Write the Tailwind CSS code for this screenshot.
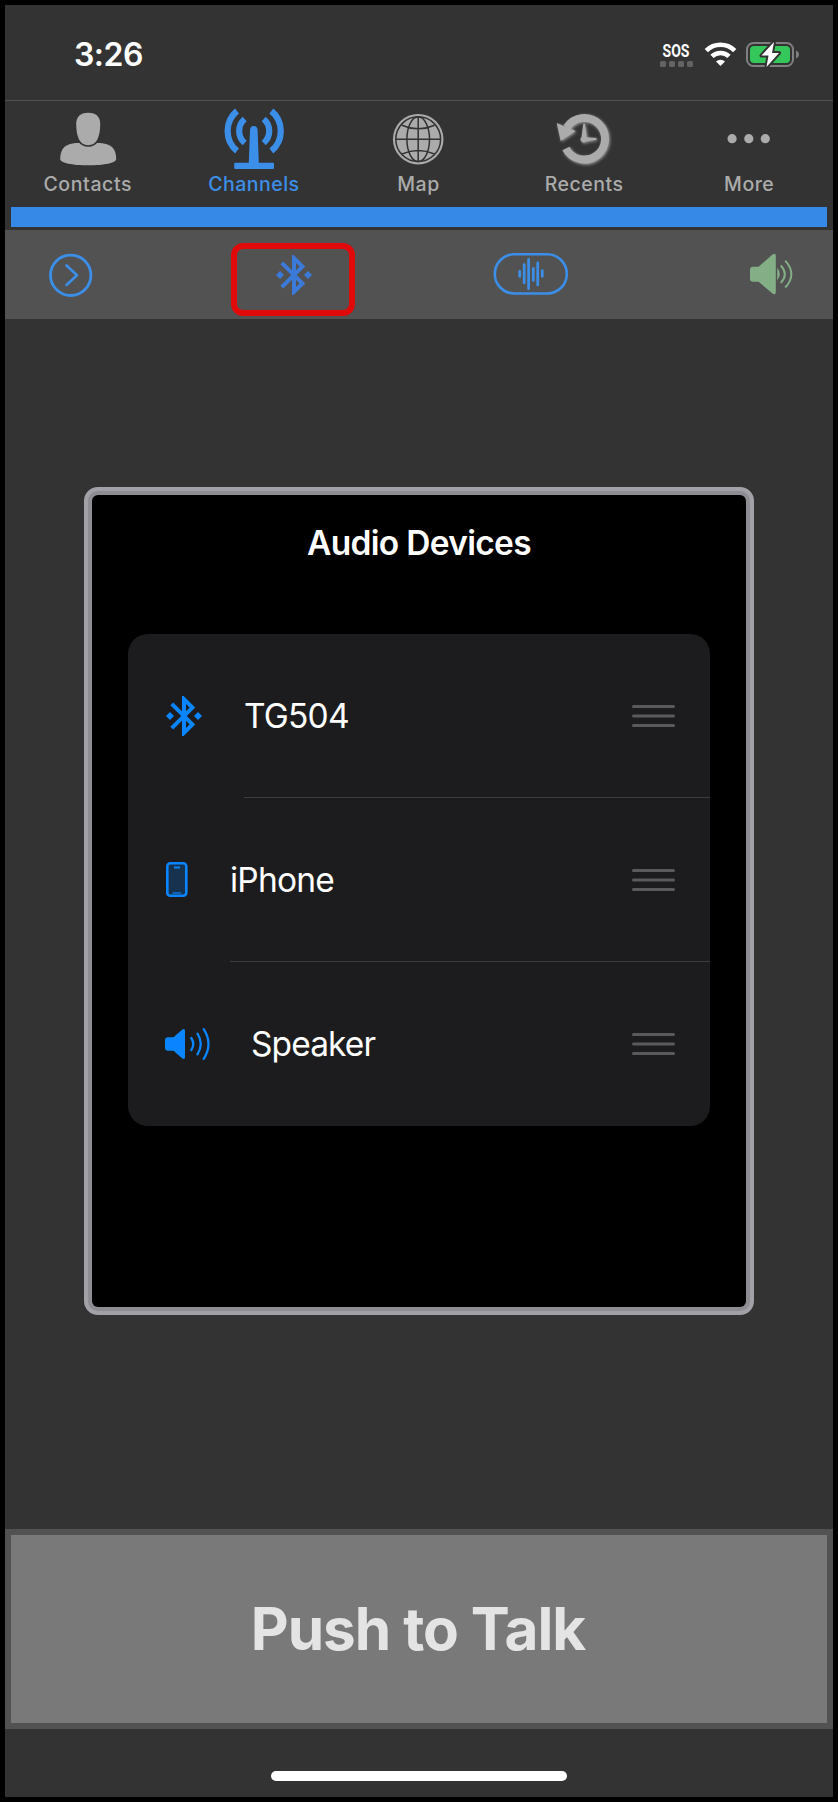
<!DOCTYPE html>
<html lang="en">
<head>
    <meta charset="UTF-8">
    <meta name="viewport" content="width=device-width, initial-scale=1.0">
    <title>Audio Devices</title>
    <script src="https://cdn.jsdelivr.net/npm/@tailwindcss/browser@4"></script>
</head>
<body class="bg-black font-['Inter',sans-serif]">
    <div class="w-[838px] h-[1802px] border-5 border-black bg-[#333333] flex flex-col overflow-hidden">

        <!-- Status bar -->
        <header class="h-24 shrink-0 border-b border-[#525252] flex justify-between pl-[69px] pr-[33px]">
            <span class="text-white text-[32px] font-semibold leading-none pt-[34px] tracking-[-0.5px]">3:26</span>
            <svg class="w-[142px] h-[95px]" viewBox="658 5 142 95">
                <text x="662.5" y="57" font-family="Roboto" font-weight="700" font-size="18" fill="#fff" textLength="27" lengthAdjust="spacingAndGlyphs">SOS</text>
                <g fill="#636363">
                    <rect x="660" y="61" width="6" height="6" rx="1.5"/>
                    <rect x="669" y="61" width="6" height="6" rx="1.5"/>
                    <rect x="678" y="61" width="6" height="6" rx="1.5"/>
                    <rect x="687" y="61" width="6" height="6" rx="1.5"/>
                </g>
                <g fill="none" stroke="#fff" stroke-width="4.6">
                    <path d="M706.3 50.6A20.2 20.2 0 0 1 734.7 50.6"/>
                    <path d="M712 56.4A12.2 12.2 0 0 1 729 56.4"/>
                </g>
                <path d="M720.5 66L716 61.4A6.6 6.6 0 0 1 725 61.4Z" fill="#fff"/>
                <rect x="747" y="43" width="46" height="23" rx="6.5" fill="none" stroke="#808080" stroke-width="2"/>
                <path d="M796 50.5C800 52 800 57 796 58.5Z" fill="#808080"/>
                <rect x="750" y="46" width="40" height="17" rx="4" fill="#34c759"/>
                <path d="M774 42L761.5 55.5H768.5L766.5 67L779 53H772Z" fill="#fff" stroke="#333" stroke-width="4" stroke-linejoin="round" paint-order="stroke"/>
            </svg>
        </header>

        <!-- Tabs -->
        <nav class="h-[106px] shrink-0 grid grid-cols-5 pt-[5px] text-[19.5px] font-medium leading-[26px] text-[#ababab]">
            <a class="flex flex-col items-center gap-px">
                <svg class="size-16" viewBox="0 0 64 64" fill="#ababab">
                    <path d="M4.2 53C4.2 42 10 37.5 20 37L44 37C54.5 37.5 60.2 42 60.2 53C60.2 57 48 59.3 32.2 59.3S4.2 57 4.2 53Z"/>
                    <path d="M32.2 6.7C40.5 6.7 44.2 11 44.2 18C44.2 30 41 39.3 32.2 39.3S20.2 30 20.2 18C20.2 11 24 6.7 32.2 6.7Z" stroke="#333" stroke-width="3" paint-order="stroke"/>
                </svg>
                <span class="tracking-[0.6px]">Contacts</span>
            </a>
            <a class="flex flex-col items-center gap-px text-[#3b8fe8]">
                <svg class="size-16 ml-[2px]" viewBox="0 0 64 64" fill="#3b8fe8">
                    <path d="M28 24C28 18.7 35.6 18.7 35.6 24L36.8 56.7H51A1 1 0 0 1 52 57.7V62A1 1 0 0 1 51 63H13.2A1 1 0 0 1 12.2 62V57.7A1 1 0 0 1 13.2 56.7H26.8Z"/>
                    <g fill="none" stroke="#3b8fe8" stroke-width="6.2">
                        <path d="M15 5A26 26 0 0 0 15 45"/>
                        <path d="M49.4 5A26 26 0 0 1 49.4 45"/>
                        <path d="M22.7 13A15.8 15.8 0 0 0 22.7 37"/>
                        <path d="M41.7 13A15.8 15.8 0 0 1 41.7 37"/>
                    </g>
                </svg>
                <span class="tracking-[0.5px] pl-px">Channels</span>
            </a>
            <a class="flex flex-col items-center gap-px">
                <svg class="size-16" viewBox="0 0 64 64">
                    <circle cx="31.2" cy="33.2" r="25.3" fill="#ababab"/>
                    <g fill="none" stroke="#333" stroke-width="1.5">
                        <circle cx="31.2" cy="33.2" r="22.4"/>
                        <ellipse cx="31.2" cy="33.2" rx="11.3" ry="22.4"/>
                        <path d="M31.2 10.8V55.6M8.8 33.2H53.6M14.9 19.2Q31.2 26.5 47.5 19.2M14.9 48Q31.2 41 47.5 48"/>
                    </g>
                </svg>
                <span class="tracking-[0.5px] pr-px">Map</span>
            </a>
            <a class="flex flex-col items-center gap-px">
                <svg class="size-16 drop-shadow-[1px_1px_1.5px_#999999]" viewBox="0 0 64 64" fill="#ababab">
                    <path d="M13.8 21.5A20.8 20.8 0 1 1 12.9 42.5" fill="none" stroke="#ababab" stroke-width="8"/>
                    <path d="M3.7 17L22.7 25L7.7 35Z"/>
                    <path d="M30.3 17.7H32L33.8 31.2L43.5 32V33.8L33 35.5A3 3 0 0 1 28.5 31.2Z"/>
                </svg>
                <span class="tracking-[0.5px] pr-px">Recents</span>
            </a>
            <a class="flex flex-col items-center gap-px">
                <svg class="size-16" viewBox="0 0 64 64" fill="#ababab">
                    <circle cx="14.1" cy="32.7" r="4.6"/>
                    <circle cx="30.8" cy="32.7" r="4.6"/>
                    <circle cx="47.3" cy="32.7" r="4.6"/>
                </svg>
                <span class="tracking-[0.5px] pr-0.5">More</span>
            </a>
        </nav>
        <div class="h-5 shrink-0 mx-1.5 mb-[3px] bg-[#3689e6]"></div>

        <!-- Toolbar -->
        <div class="h-[89px] shrink-0 bg-[#525252] flex pl-[43px]">
            <svg class="w-[46px] h-[89px]" viewBox="48 230 46 89" fill="none" stroke="#3b8fe8" stroke-linecap="round" stroke-linejoin="round">
                <circle cx="70.7" cy="275.3" r="20.2" stroke-width="2.8"/>
                <path d="M66.5 265.5L77 275.3L66.5 285" stroke-width="2.6"/>
            </svg>
            <div class="ml-[136.5px] mt-[13px] w-[124.5px] h-[73px] border-6 border-[#e10a0a] rounded-xl pl-[39.5px] pt-1.5">
                <svg class="w-9 h-10" viewBox="0 0 36 40" fill="none" stroke="#3b7ad9" stroke-width="4">
                    <path d="M5.8 7.8L26.4 28.4L18 36.8V3.2L26.4 11.6L5.8 32.2"/>
                    <path d="M4 16L8 20L4 24L0 20ZM32 16L36 20L32 24L28 20Z" fill="#3b7ad9" stroke="none"/>
                </svg>
            </div>
            <svg class="ml-[137px] w-[78px] h-[89px]" viewBox="492 230 78 89" fill="none" stroke="#3b8fe8" stroke-linecap="round">
                <rect x="494.8" y="254.3" width="72" height="39.2" rx="19.6" stroke-width="2.6"/>
                <path d="M519.7 271.3V276.5M524.2 264.5V282.8M528.6 259.3V288.7M533.3 268.3V280.5M537.7 262.8V285M542.3 270.5V276.3" stroke-width="2.7"/>
            </svg>
            <svg class="ml-[178px] w-12 h-[89px]" viewBox="0 0 48 89" fill="#83ae86">
                <path d="M5 36.7H10.5L24.5 24.5Q27.8 22.5 27.8 26V62Q27.8 65.5 24.5 63.5L10.5 51.7H5Q2 51.7 2 48.7V39.7Q2 36.7 5 36.7Z"/>
                <path d="M29.2 37.7Q34.4 44 29.2 50.3Z"/>
                <g fill="none" stroke="#83ae86" stroke-width="1.9">
                    <path d="M32.8 35.5Q41 44.3 32.8 53"/>
                    <path d="M37.2 30.7Q49.5 44.2 37.2 57.5"/>
                </g>
            </svg>
        </div>

        <!-- Audio devices dialog -->
        <section class="mt-[168px] mx-[79px] h-[828px] shrink-0 rounded-[14px] border-4 border-[#a2a1a8] bg-[#8e8d94] p-1">
            <div class="h-full rounded-md bg-black px-9 pt-7">
                <h1 class="text-white text-[33.5px] font-semibold leading-[41px] text-center tracking-[-0.7px]">Audio Devices</h1>
                <ul class="mt-[70px] rounded-[20px] bg-[#1c1c1e] text-white text-[33.5px] overflow-hidden">
                    <li class="h-[164px] flex items-center pl-[38px]">
                        <svg class="w-9 h-10 shrink-0" viewBox="0 0 36 40" fill="none" stroke="#0a84ff" stroke-width="4">
                            <path d="M5.8 7.8L26.4 28.4L18 36.8V3.2L26.4 11.6L5.8 32.2"/>
                            <path d="M4 16L8 20L4 24L0 20ZM32 16L36 20L32 24L28 20Z" fill="#0a84ff" stroke="none"/>
                        </svg>
                        <div class="ml-[42px] flex-1 h-full flex items-center justify-between border-b border-[#3d3d41] pr-[35px]">
                            <span class="pt-0.5 tracking-[-0.8px]">TG504</span>
                            <svg class="w-[43px] h-6" viewBox="0 0 43 24" stroke="#5a5a5e" stroke-width="3" stroke-linecap="round"><path d="M1.5 2.5H41.5M1.5 12H41.5M1.5 21.5H41.5"/></svg>
                        </div>
                    </li>
                    <li class="h-[164px] flex items-center pl-[38px]">
                        <svg class="w-[22px] h-9 shrink-0" viewBox="0 0 22 36" stroke="#0a84ff">
                            <rect x="1.3" y="1.3" width="19" height="32.5" rx="3" fill="#17324f" stroke-width="2.6"/>
                            <path d="M8 5.5H14" stroke-width="2"/>
                            <path d="M6.5 31H15" stroke-width="1.2"/>
                        </svg>
                        <div class="ml-[42px] flex-1 h-full flex items-center justify-between border-b border-[#3d3d41] pr-[35px]">
                            <span class="pt-0.5 tracking-[-0.8px]">iPhone</span>
                            <svg class="w-[43px] h-6" viewBox="0 0 43 24" stroke="#5a5a5e" stroke-width="3" stroke-linecap="round"><path d="M1.5 2.5H41.5M1.5 12H41.5M1.5 21.5H41.5"/></svg>
                        </div>
                    </li>
                    <li class="h-[164px] flex items-center pl-[37px]">
                        <svg class="w-[45px] h-[34px] shrink-0" viewBox="0 0 45 34">
                            <path d="M3 10.3H8.5L17 2.8Q20 0.8 20 4V30Q20 33.2 17 31.2L8.5 23.7H3Q0 23.7 0 20.7V13.3Q0 10.3 3 10.3Z" fill="#0a84ff"/>
                            <g fill="none" stroke="#0a84ff" stroke-width="2.3" stroke-linecap="round">
                                <path d="M26.3 11Q30.3 17 26.3 23"/>
                                <path d="M32.5 6.7Q39 17 32.5 27.3"/>
                                <path d="M38.7 2.2Q48.3 17 38.7 31.8"/>
                            </g>
                        </svg>
                        <div class="ml-[41px] flex-1 h-full flex items-center justify-between pr-[35px]">
                            <span class="tracking-[-0.9px]">Speaker</span>
                            <svg class="w-[43px] h-6" viewBox="0 0 43 24" stroke="#5a5a5e" stroke-width="3" stroke-linecap="round"><path d="M1.5 2.5H41.5M1.5 12H41.5M1.5 21.5H41.5"/></svg>
                        </div>
                    </li>
                </ul>
            </div>
        </section>

        <!-- Push to talk -->
        <button class="mt-[214px] h-[200px] shrink-0 border-6 border-[#525252] bg-[#797979] text-[#e4e4e4] text-[58.5px] font-bold tracking-[-1px] pr-0.5">Push to Talk</button>
        <div class="mt-[42px] mx-auto w-[296px] h-2.5 shrink-0 rounded-full bg-white"></div>
    </div>
</body>
</html>
